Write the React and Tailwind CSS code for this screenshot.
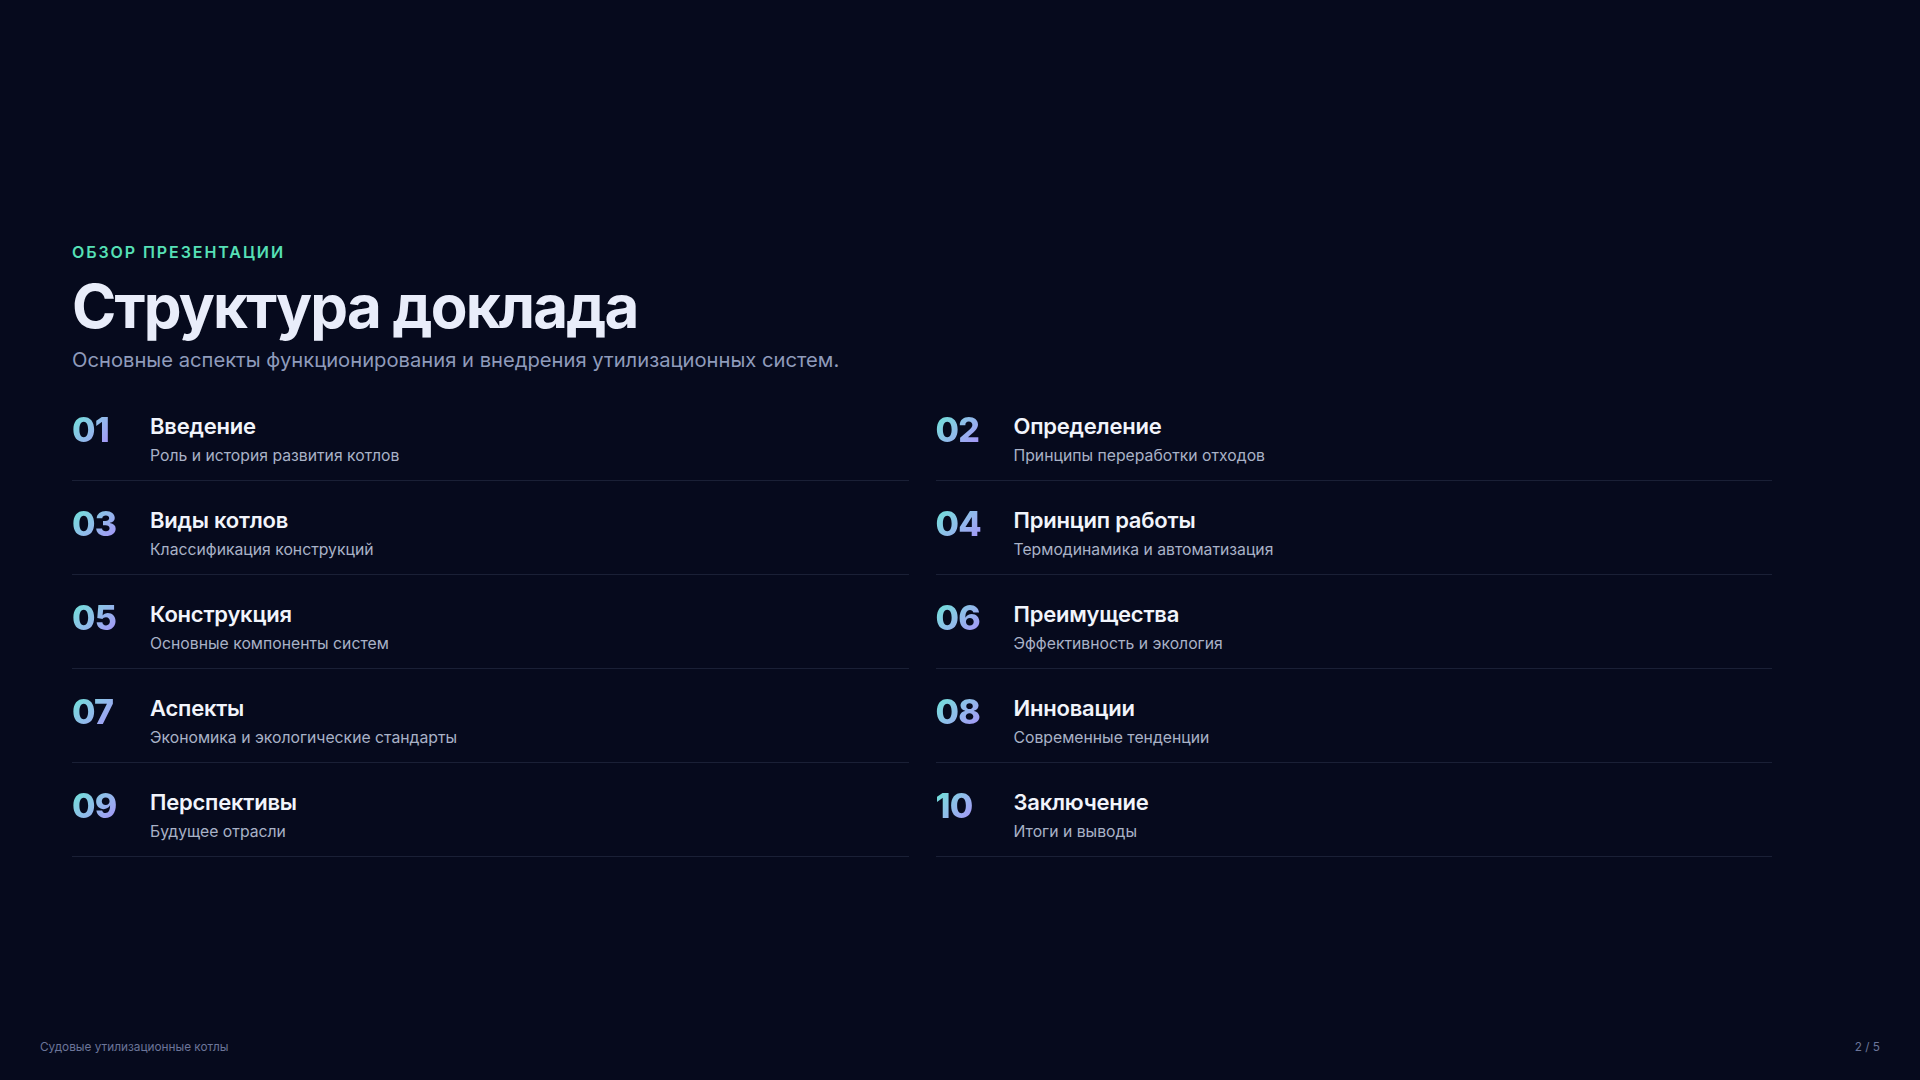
import React from 'react';

const items = [
    { n: '01', title: 'Введение', desc: 'Роль и история развития котлов' },
    { n: '02', title: 'Определение', desc: 'Принципы переработки отходов' },
    { n: '03', title: 'Виды котлов', desc: 'Классификация конструкций' },
    { n: '04', title: 'Принцип работы', desc: 'Термодинамика и автоматизация' },
    { n: '05', title: 'Конструкция', desc: 'Основные компоненты систем' },
    { n: '06', title: 'Преимущества', desc: 'Эффективность и экология' },
    { n: '07', title: 'Аспекты', desc: 'Экономика и экологические стандарты' },
    { n: '08', title: 'Инновации', desc: 'Современные тенденции' },
    { n: '09', title: 'Перспективы', desc: 'Будущее отрасли' },
    { n: '10', title: 'Заключение', desc: 'Итоги и выводы' },
];

const AgendaItem = ({ item }) => (
    <div className="flex gap-6 pt-[25px] pb-[13px] border-b border-[#1a2036]">
        <div className="w-[54px] shrink-0 pt-[3px]">
            <span className="text-[34px] leading-[30px] font-extrabold tracking-tight
        bg-linear-to-br from-[#5eead4] to-[#a78bfa] bg-clip-text text-transparent">
                {item.n}
            </span>
        </div>
        <div className="flex flex-col gap-[4px]">
            <h3 className="text-[22px] leading-[28px] font-semibold text-[#f1f4fb] tracking-[-0.01em]">
                {item.title}
            </h3>
            <p className="text-[15.75px] leading-[23px] text-[#a9b2c7]">{item.desc}</p>
        </div>
    </div>
);

export default function App() {
    return (
        <div className="h-screen w-full flex flex-col bg-[#060a1d] overflow-hidden"
            style={{ fontFamily: 'Inter, "Noto Sans", sans-serif' }}>
            {/* Контент */}
            <main className="flex-1 px-[72px] pt-[242px]">
                <div className="max-w-[1700px]">
                    <p className="text-[16px] leading-[20px] font-semibold uppercase tracking-[0.12em] text-[#56e0b6]">
                        Обзор презентации
                    </p>
                    <h1 className="mt-[11px] text-[60px] leading-[66px] font-bold tracking-[-0.03em] text-[#e9edfa]">
                        Структура доклада
                    </h1>
                    <p className="mt-[7px] text-[20.2px] leading-[28px] text-[#8f9bbb]">
                        Основные аспекты функционирования и внедрения утилизационных систем.
                    </p>

                    <div className="mt-[13px] grid grid-cols-2 gap-x-[27px]">
                        {items.map((item) => (
                            <AgendaItem key={item.n} item={item} />
                        ))}
                    </div>
                </div>
            </main>

            {/* Футер */}
            <footer className="flex items-center justify-between px-10 pb-[25px] text-[11.8px] leading-[16px] text-[#6b7599]">
                <span>Судовые утилизационные котлы</span>
                <span>2 / 5</span>
            </footer>
        </div>
    );
}
